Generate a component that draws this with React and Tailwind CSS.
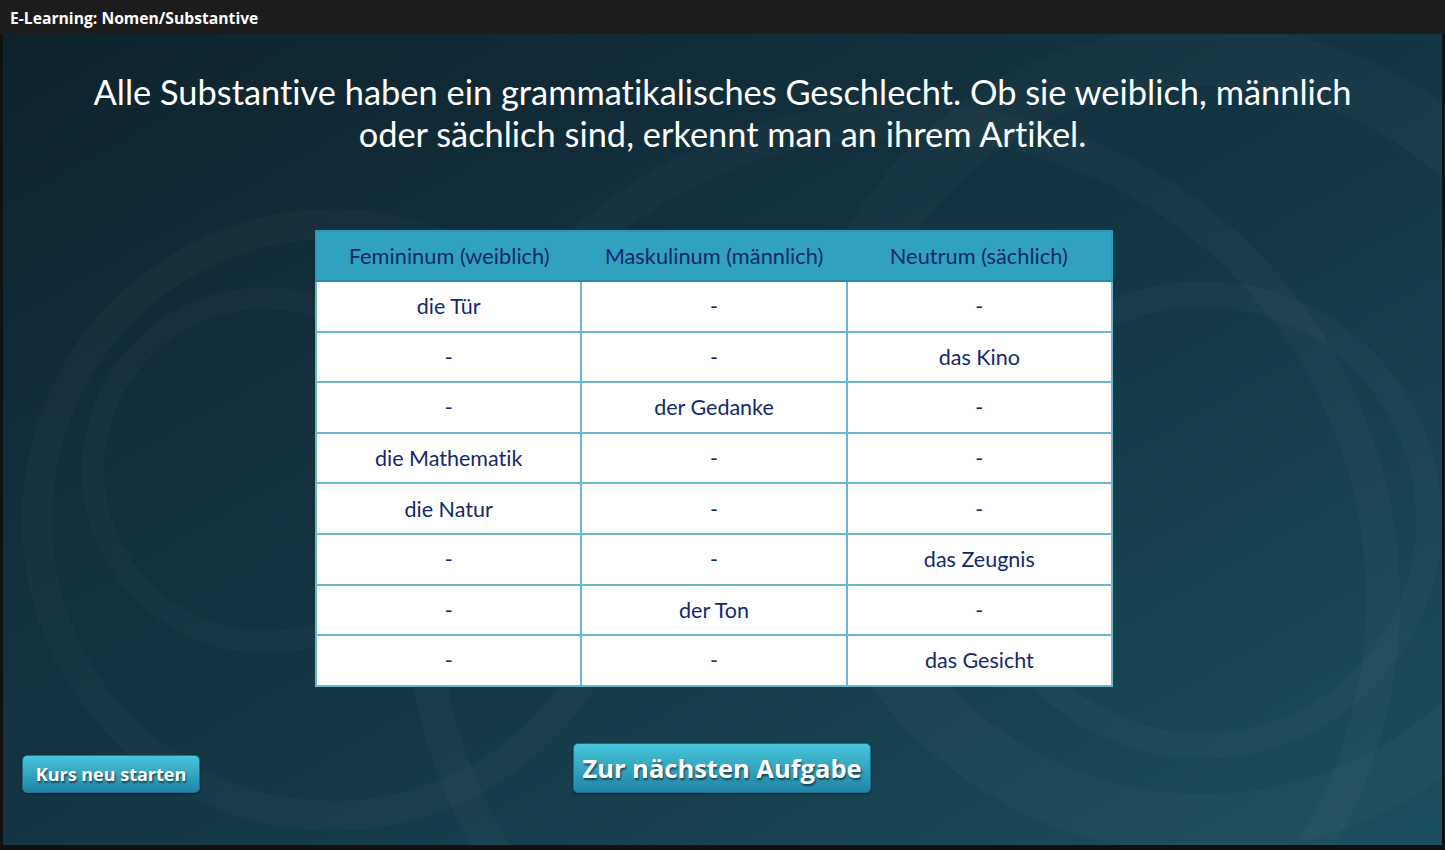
import React from "react";

const rows = [
  ["die Tür", "-", "-"],
  ["-", "-", "das Kino"],
  ["-", "der Gedanke", "-"],
  ["die Mathematik", "-", "-"],
  ["die Natur", "-", "-"],
  ["-", "-", "das Zeugnis"],
  ["-", "der Ton", "-"],
  ["-", "-", "das Gesicht"],
];

const headers = ["Femininum (weiblich)", "Maskulinum (männlich)", "Neutrum (sächlich)"];

function BackgroundArcs() {
  return (
    <svg
      className="pointer-events-none absolute inset-0 h-full w-full"
      viewBox="0 0 1439 811"
      preserveAspectRatio="none"
    >
      <g fill="none" stroke="#ffffff" strokeOpacity="0.025">
        <circle cx="330" cy="486" r="296" strokeWidth="30" />
        <circle cx="262" cy="436" r="172" strokeWidth="22" />
        <circle cx="900" cy="566" r="480" strokeWidth="34" />
        <circle cx="1200" cy="486" r="226" strokeWidth="26" />
        <circle cx="1200" cy="406" r="384" strokeWidth="60" />
      </g>
    </svg>
  );
}

function CourseButton({ children, className }) {
  return (
    <button
      className={
        "rounded-[5px] border border-[#1b6f8a] bg-gradient-to-b from-[#47c6da] to-[#2284a6] font-bold text-white [text-shadow:1px_2px_2px_rgba(0,0,0,0.55)] shadow-[0_1px_2px_rgba(0,0,0,0.4)] " +
        className
      }
      style={{ fontFamily: "'Open Sans', 'Liberation Sans', sans-serif" }}
    >
      {children}
    </button>
  );
}

export default function App() {
  return (
    <div className="flex h-[850px] w-[1445px] flex-col bg-[#111111]">
      <div
        className="flex h-[34px] shrink-0 items-center bg-[#1c1c1c] pl-[10px] pt-[3px] text-[15.7px] font-bold text-white"
        style={{ fontFamily: "'Open Sans', 'Liberation Sans', sans-serif" }}
      >
        E-Learning: Nomen/Substantive
      </div>
      <div className="mx-[3px] mb-[5px] flex-1 overflow-hidden">
        <div
          className="relative flex h-full flex-col items-center bg-gradient-to-br from-[#0f222c] via-[#133643] to-[#1b4e5d] [font-variant-ligatures:none]"
          style={{ fontFamily: "Lato, 'Open Sans', sans-serif" }}
        >
          <BackgroundArcs />
          <h1 className="relative mt-[37px] text-center text-[34.4px] font-normal leading-[42px] text-white">
            Alle Substantive haben ein grammatikalisches Geschlecht. Ob sie weiblich, männlich
            <br />
            oder sächlich sind, erkennt man an ihrem Artikel.
          </h1>

          <table className="relative ml-[-17px] mt-[75px] w-[798px] table-fixed border-collapse border-2 border-[#2a9ab8] text-[21.5px] text-[#14296b]">
            <thead>
              <tr className="h-[50px] bg-[#31a1c0]">
                {headers.map((h) => (
                  <th key={h} className="border-b-2 border-[#2a8aa8] text-center text-[21.8px] font-normal">
                    {h}
                  </th>
                ))}
              </tr>
            </thead>
            <tbody>
              {rows.map((row, i) => (
                <tr key={i} className="h-[50.6px] bg-white">
                  {row.map((cell, j) => (
                    <td key={j} className="border-2 border-[#68b9cf] text-center">
                      {cell}
                    </td>
                  ))}
                </tr>
              ))}
            </tbody>
          </table>

          <div className="relative mt-auto mb-[52px] flex w-full items-end">
            <div className="w-[570px] pl-[19px]">
              <CourseButton className="h-[38px] w-[178px] text-[18px]">Kurs neu starten</CourseButton>
            </div>
            <CourseButton className="h-[50px] w-[298px] text-[25.5px]">Zur nächsten Aufgabe</CourseButton>
          </div>
        </div>
      </div>
    </div>
  );
}
